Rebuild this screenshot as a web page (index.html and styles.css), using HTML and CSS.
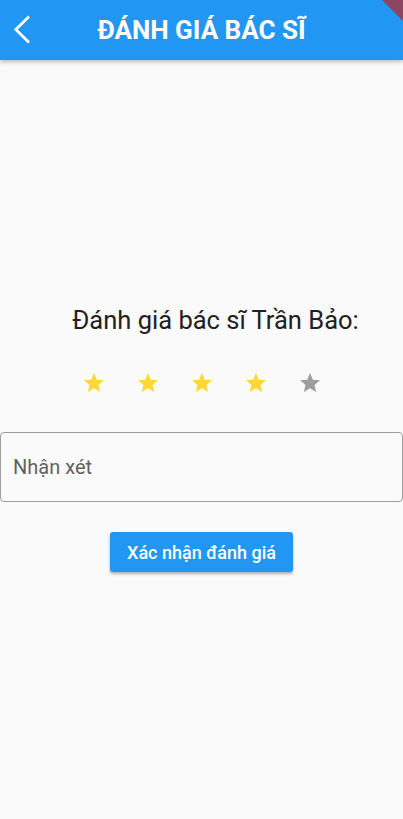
FILE: index.html
```html
<!DOCTYPE html>
<html lang="vi">
<head>
<meta charset="utf-8">
<title>Đánh giá bác sĩ</title>
<link rel="stylesheet" href="styles.css">
</head>
<body>
<div class="screen">
  <header class="appbar">
    <button class="back" aria-label="Quay lại">
      <svg width="24" height="30" viewBox="0 0 24 30"><path d="M19 1.5 L5.8 14.5 L19 27.5" fill="none" stroke="#fff" stroke-width="2.8" stroke-linecap="butt" stroke-linejoin="miter"/></svg>
    </button>
    <h1 class="title">ĐÁNH GIÁ BÁC SĨ</h1>
  </header>
  <div class="debug"></div>
  <main class="content">
    <p class="prompt">Đánh giá bác sĩ Trần Bảo:</p>
    <div class="stars">
      <svg class="star on" viewBox="0 0 24 24"><path d="M12 17.27L18.18 21l-1.64-7.03L22 9.24l-7.19-.61L12 2 9.19 8.63 2 9.24l5.46 4.73L5.82 21z"/></svg>
      <svg class="star on" viewBox="0 0 24 24"><path d="M12 17.27L18.18 21l-1.64-7.03L22 9.24l-7.19-.61L12 2 9.19 8.63 2 9.24l5.46 4.73L5.82 21z"/></svg>
      <svg class="star on" viewBox="0 0 24 24"><path d="M12 17.27L18.18 21l-1.64-7.03L22 9.24l-7.19-.61L12 2 9.19 8.63 2 9.24l5.46 4.73L5.82 21z"/></svg>
      <svg class="star on" viewBox="0 0 24 24"><path d="M12 17.27L18.18 21l-1.64-7.03L22 9.24l-7.19-.61L12 2 9.19 8.63 2 9.24l5.46 4.73L5.82 21z"/></svg>
      <svg class="star off" viewBox="0 0 24 24"><path d="M12 17.27L18.18 21l-1.64-7.03L22 9.24l-7.19-.61L12 2 9.19 8.63 2 9.24l5.46 4.73L5.82 21z"/></svg>
    </div>
    <div class="field"><span class="placeholder">Nhận xét</span></div>
    <button class="submit">Xác nhận đánh giá</button>
  </main>
</div>
</body>
</html>
```
FILE: styles.css
```css
* { box-sizing: border-box; }
html, body { margin: 0; padding: 0; }
body {
  background: #fafafa;
  font-family: Roboto, "Noto Sans", sans-serif;
  width: 403px;
  height: 819px;
  overflow: hidden;
}
.screen {
  position: relative;
  height: 819px;
  display: flex;
  flex-direction: column;
}
.appbar {
  height: 60px;
  background: #2196f3;
  display: flex;
  align-items: center;
  position: relative;
  box-shadow: 0 2px 4px rgba(0,0,0,0.25);
  z-index: 2;
  flex: none;
}
.back {
  background: none;
  border: 0;
  padding: 0;
  margin-left: 10px;
  width: 24px;
  height: 30px;
  display: flex;
}
.title {
  position: absolute;
  left: 0;
  right: 0;
  margin: 0;
  text-align: center;
  color: #fff;
  font-size: 26px;
  font-weight: 700;
  pointer-events: none;
}
.debug {
  position: absolute;
  top: 0;
  right: 0;
  width: 21px;
  height: 21px;
  background: #8c4560;
  clip-path: polygon(0 0, 100% 0, 100% 100%);
  z-index: 3;
}
.content {
  flex: 1;
  display: flex;
  flex-direction: column;
  align-items: center;
  justify-content: center;
  padding-bottom: 2px;
}
.prompt {
  margin: 0;
  padding-left: 28px;
  font-size: 25.5px;
  color: #212121;
  line-height: 30px;
}
.stars {
  display: flex;
  gap: 30px;
  margin-top: 36px;
}
.star { width: 24px; height: 24px; }
.star.on { fill: #fdd835; }
.star.off { fill: #9e9e9e; }
.field {
  align-self: stretch;
  margin-top: 37px;
  height: 70px;
  border: 1px solid #9e9e9e;
  border-radius: 4px;
  display: flex;
  align-items: center;
  padding-left: 12px;
}
.placeholder {
  font-size: 20px;
  color: #616161;
}
.submit {
  margin-top: 30px;
  width: 183px;
  height: 40px;
  background: #2196f3;
  color: #fff;
  border: 0;
  border-radius: 3px;
  font-family: Roboto, sans-serif;
  font-size: 18px;
  font-weight: 500;
  box-shadow: 0 2px 3px rgba(0,0,0,0.3);
}
```
